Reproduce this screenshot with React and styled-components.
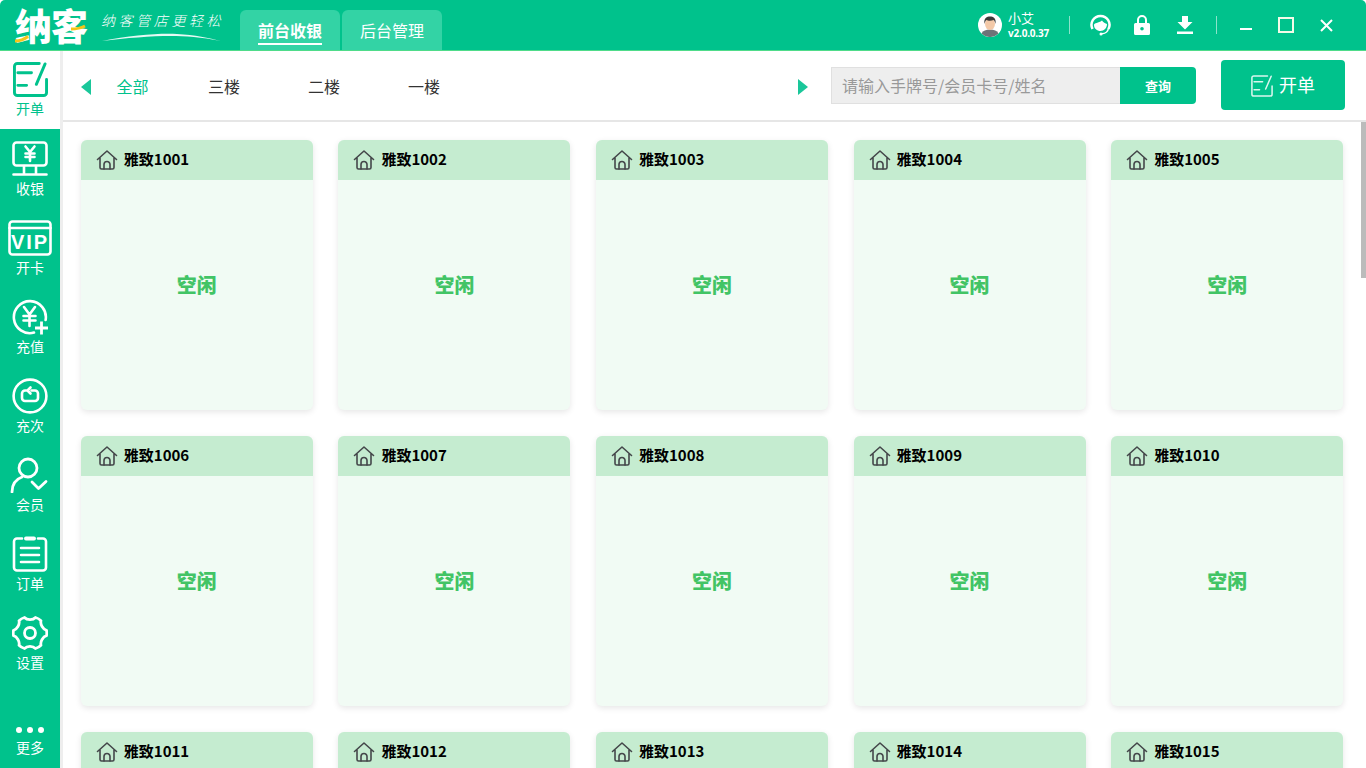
import React from 'react'
import styled, { createGlobalStyle } from 'styled-components'

const GREEN = '#00c28c'

const GlobalStyle = createGlobalStyle`
    html, body {
        margin: 0;
        height: 100%;
        overflow: hidden;
        background: #fff;
        font-family: "Noto Sans CJK SC", "Noto Sans", sans-serif;
    }
    #root { height: 100%; }
    * { box-sizing: border-box; }
`

const Page = styled.div`
    height: 100vh;
    display: flex;
    flex-direction: column;
`

const TopBar = styled.header`
    height: 51px;
    flex: none;
    display: flex;
    align-items: stretch;
    background: ${GREEN};
    border-bottom: 1px solid #4fdc8a;
    border-radius: 5px 5px 0 0;
    color: #fff;
    padding-left: 15px;
`

const Logo = styled.div`
    position: relative;
    width: 76px;
    font-size: 37px;
    font-weight: 900;
    line-height: 51px;
    letter-spacing: -1px;
    white-space: nowrap;
    color: #fff;
`

const LogoMark = styled.svg`
    position: absolute;
    left: 0;
    top: 0;
    width: 76px;
    height: 50px;
`

const Slogan = styled.div`
    width: 139px;
    margin-left: 10px;
    display: flex;
    flex-direction: column;
    padding-top: 11px;
`

const SloganText = styled.span`
    font-size: 14px;
    line-height: 18px;
    letter-spacing: 3.6px;
    font-weight: 300;
    font-style: italic;
    white-space: nowrap;
`

const Swoosh = styled.svg`
    width: 122px;
    height: 10px;
    margin-top: 3px;
`

const Tabs = styled.nav`
    display: flex;
    gap: 2px;
    margin-top: 10px;
`

const Tab = styled.div`
    width: 100px;
    height: 40px;
    border-radius: 6px 6px 0 0;
    background: #33d3a5;
    display: flex;
    align-items: flex-start;
    justify-content: center;
    padding-top: 8px;
    span {
        font-size: 16px;
        line-height: 24px;
        height: 27px;
        font-weight: ${p => (p.$active ? 700 : 400)};
        border-bottom: ${p => (p.$active ? '2px solid #fff' : 'none')};
    }
`

const RightArea = styled.div`
    margin-left: auto;
    display: flex;
    align-items: center;
    height: 50px;
    position: relative;
    padding-right: 33px;
`

const Avatar = styled.svg`
    width: 24px;
    height: 24px;
    margin-right: 6px;
`

const UserInfo = styled.div`
    width: 61px;
    display: flex;
    flex-direction: column;
    margin-top: -2px;
`

const UserName = styled.span`
    font-size: 13px;
    line-height: 17px;
`

const Version = styled.span`
    font-size: 10px;
    line-height: 14px;
    font-weight: 700;
    font-family: "Open Sans", sans-serif;
    letter-spacing: -0.2px;
`

const Separator = styled.i`
    width: 1px;
    height: 18px;
    margin-left: ${p => p.$gap || 0}px;
    background: rgba(255, 255, 255, 0.55);
`

const BarIcon = styled.svg`
    flex: none;
    margin-left: ${p => p.$gap}px;
    display: block;
`

const Body = styled.div`
    flex: 1;
    min-height: 0;
    display: flex;
`

const Sidebar = styled.aside`
    width: 63px;
    flex: none;
    background: ${GREEN};
    border-right: 3px solid #eee;
    display: flex;
    flex-direction: column;
    overflow: hidden;
`

const NavItem = styled.div`
    height: ${p => (p.$active ? 78 : 79)}px;
    margin-bottom: ${p => (p.$active ? 1 : 0)}px;
    flex: none;
    padding-top: 11px;
    display: flex;
    flex-direction: column;
    align-items: center;
    color: ${p => (p.$active ? GREEN : '#fff')};
    background: ${p => (p.$active ? '#fff' : 'transparent')};
    margin-top: ${p => (p.$last ? 'auto' : 0)};
    svg { display: block; flex: none; }
`

const NavLabel = styled.span`
    font-size: 14px;
    line-height: 18px;
    height: 18px;
    margin-top: 2px;
`

const Main = styled.main`
    flex: 1;
    min-width: 0;
    display: flex;
    flex-direction: column;
    position: relative;
`

const Toolbar = styled.div`
    height: 71px;
    flex: none;
    display: flex;
    align-items: center;
    background: #fff;
    border-bottom: 2px solid #e6e6e6;
    padding-left: 18px;
`

const Arrow = styled.svg`
    width: 10px;
    height: 16px;
    flex: none;
    margin-top: 3px;
`

const FloorList = styled.div`
    width: 707px;
    display: flex;
`

const Floor = styled.span`
    width: 100px;
    text-align: center;
    font-size: 16px;
    line-height: 24px;
    color: ${p => (p.$active ? GREEN : '#333')};
    &:first-child { width: 83px; }
`

const Search = styled.div`
    display: flex;
    margin-left: 23px;
    margin-top: -1px;
    height: 37px;
`

const SearchInput = styled.input`
    width: 289px;
    height: 37px;
    border: 1px solid #e0e0e0;
    border-right: none;
    background: #eee;
    padding: 0 10px;
    font: inherit;
    font-size: 16px;
    outline: none;
    &::placeholder { color: #999; opacity: 1; }
`

const SearchButton = styled.button`
    width: 76px;
    height: 37px;
    border: none;
    border-radius: 0 4px 4px 0;
    background: ${GREEN};
    color: #fff;
    font: inherit;
    font-size: 13px;
    font-weight: 700;
`

const OpenButton = styled.button`
    width: 124px;
    height: 50px;
    margin-left: 25px;
    margin-top: -2px;
    border: none;
    border-radius: 4px;
    background: ${GREEN};
    color: #fff;
    font: inherit;
    font-size: 18px;
    line-height: 24px;
    display: flex;
    align-items: center;
    justify-content: center;
    gap: 6px;
    span { margin-top: -2px; }
    svg { opacity: 0.85; margin-top: 2px; }
`

const Scroller = styled.div`
    flex: 1;
    min-height: 0;
    overflow: hidden;
    padding: 18px 22.8px 0 17.8px;
`

const ScrollThumb = styled.div`
    position: absolute;
    top: 71px;
    right: 0;
    width: 5px;
    height: 156px;
    background: #bbb;
`

const RoomGrid = styled.div`
    display: grid;
    grid-template-columns: repeat(5, 232px);
    justify-content: space-between;
    grid-auto-rows: 270px;
    row-gap: 26px;
    padding-bottom: 20px;
`

const Card = styled.div`
    border-radius: 6px;
    background: #f1fbf4;
    box-shadow: 0 2px 6px rgba(0, 0, 0, 0.1);
    display: flex;
    flex-direction: column;
`

const CardHead = styled.div`
    height: 40px;
    flex: none;
    display: flex;
    align-items: center;
    gap: 6px;
    padding-left: 15px;
    padding-bottom: 3px;
    background: #c5ecd0;
    border-radius: 6px 6px 0 0;
    color: #000;
    font-size: 15px;
    font-weight: 700;
    svg { margin-top: 3px; }
`

const CardBody = styled.div`
    flex: 1;
    display: flex;
    align-items: center;
    justify-content: center;
    padding-bottom: 22px;
    color: #42c465;
    font-size: 20px;
    font-weight: 900;
`

const HomeIcon = () => (
    <svg width="22" height="22" viewBox="0 0 22 22" fill="none" stroke="#44474a" strokeWidth="1.6" strokeLinejoin="round" strokeLinecap="round">
        <path d="M1.5 10.5 11 2l9.5 8.5M4 9v9.5a1.5 1.5 0 0 0 1.5 1.5h11a1.5 1.5 0 0 0 1.5-1.5V9" />
        <path d="M8 20v-4.5a3 3 0 0 1 6 0V20" />
    </svg>
)

const OpenIcon = ({ size = 36, width = 3 }) => (
    <svg width={size} height={size} viewBox="0 0 36 36" fill="none" stroke="currentColor" strokeWidth={width} strokeLinecap="round" strokeLinejoin="round">
        <path d="M27 1.5H4.5a3 3 0 0 0-3 3v27a3 3 0 0 0 3 3h27a3 3 0 0 0 3-3V18" />
        <path d="M5 11h14M5 24h9" />
        <path d="M33 2 24 23" />
    </svg>
)

const CashIcon = () => (
    <svg width="36" height="36" viewBox="0 0 36 36" fill="none" stroke="currentColor" strokeWidth="2.6" strokeLinecap="round" strokeLinejoin="round">
        <rect x="1.5" y="1.5" width="33" height="23" rx="3" />
        <path d="M12 25v7M24 25v7M1.5 33.5h33" />
        <path d="M13.5 5.5 18 11l4.5-5.5M18 11v9M13.5 12.5h9M13.5 16h9" />
    </svg>
)

const VipIcon = () => (
    <svg width="44" height="36" viewBox="0 0 44 36" fill="none" stroke="currentColor" strokeWidth="2.6" strokeLinecap="round" strokeLinejoin="round">
        <rect x="1.5" y="1.5" width="41" height="33" rx="3" />
        <path d="M1.5 8h41" />
        <text x="22" y="29" textAnchor="middle" fill="currentColor" stroke="none" fontFamily="Liberation Sans, sans-serif" fontWeight="700" fontSize="20" letterSpacing="2">VIP</text>
    </svg>
)

const RechargeIcon = () => (
    <svg width="36" height="36" viewBox="0 0 36 36" fill="none" stroke="currentColor" strokeWidth="2.6" strokeLinecap="round" strokeLinejoin="round">
        <path d="M22 33.6A16 16 0 1 1 33.6 21" />
        <path d="M12 8l5.5 7.5L23 8M17.5 15.5V27M11.5 17h12M11.5 21.5h12" />
        <path d="M23 29h13M29.5 22.5v13" strokeWidth="2.8" strokeLinecap="butt" />
    </svg>
)

const TimesIcon = () => (
    <svg width="36" height="36" viewBox="0 0 36 36" fill="none" stroke="currentColor" strokeWidth="2.6" strokeLinecap="round" strokeLinejoin="round">
        <circle cx="18" cy="18" r="16.4" />
        <path d="M14 12.5h-1a3 3 0 0 0-3 3v4.5a3 3 0 0 0 3 3h10a3 3 0 0 0 3-3v-4.5a3 3 0 0 0-3-3h-3.5" />
        <path d="M18.5 9.5 15.5 12.5l3 3" />
    </svg>
)

const MemberIcon = () => (
    <svg width="40" height="36" viewBox="0 0 40 36" fill="none" stroke="currentColor" strokeWidth="2.8" strokeLinecap="round" strokeLinejoin="round">
        <circle cx="18" cy="11" r="9" />
        <path d="M2 35c0-8 4.500-13 10-15" />
        <path d="M22 25l6.500 6.500L36 24.500" />
    </svg>
)

const OrderIcon = () => (
    <svg width="36" height="36" viewBox="0 0 36 36" fill="none" stroke="currentColor" strokeWidth="2.6" strokeLinecap="round" strokeLinejoin="round">
        <path d="M10 2.500H5a3 3 0 0 0-3 3V31.500a3 3 0 0 0 3 3h26a3 3 0 0 0 3-3V5.500a3 3 0 0 0-3-3h-5" />
        <path d="M14 2.500h8" strokeWidth="4" />
        <path d="M9 12h18M9 19h18M9 26h18" />
    </svg>
)

const GearIcon = () => (
    <svg width="36" height="36" viewBox="0 0 36 36" fill="none" stroke="currentColor" strokeWidth="2.8" strokeLinejoin="round">
        <path d="M12.500 3.500c2.500 2.800 8.500 2.800 11 0 1.800.5 4.200 1.900 5.500 3.200-1 3.600 2 8.700 5.500 9.600.4 1.800.4 3.600 0 5.400-3.500.9-6.500 6-5.500 9.600-1.300 1.300-3.700 2.700-5.500 3.200-2.500-2.800-8.500-2.800-11 0-1.800-.5-4.200-1.900-5.500-3.200 1-3.600-2-8.700-5.500-9.600-.4-1.800-.4-3.600 0-5.400C5 15.400 8 10.300 7 6.700c1.300-1.300 3.700-2.700 5.500-3.200Z" transform="translate(0 -1)" />
        <circle cx="18" cy="18" r="5.500" />
    </svg>
)

const DotsIcon = () => (
    <svg width="30" height="36" viewBox="0 0 30 36" fill="currentColor">
        <circle cx="4" cy="30" r="3" />
        <circle cx="15" cy="30" r="3" />
        <circle cx="26" cy="30" r="3" />
    </svg>
)

const navItems = [
    { label: '开单', icon: <OpenIcon size={35} />, active: true },
    { label: '收银', icon: <CashIcon /> },
    { label: '开卡', icon: <VipIcon /> },
    { label: '充值', icon: <RechargeIcon /> },
    { label: '充次', icon: <TimesIcon /> },
    { label: '会员', icon: <MemberIcon /> },
    { label: '订单', icon: <OrderIcon /> },
    { label: '设置', icon: <GearIcon /> },
]

const floors = ['全部', '三楼', '二楼', '一楼']
const rooms = Array.from({ length: 15 }, (_, i) => `雅致${1001 + i}`)

export default function App() {
    return (
        <Page>
            <GlobalStyle />
            <TopBar>
                <Logo>
                    纳客
                    <LogoMark viewBox="0 0 76 50">
                        <path d="M0 41c5 0 9-1.500 13-4.500" stroke="#f5c518" strokeWidth="3" fill="none" />
                        <path d="M56 29c5 0 9-.5 14-3" stroke="#f5c518" strokeWidth="3" fill="none" />
                    </LogoMark>
                </Logo>
                <Slogan>
                    <SloganText>纳客管店更轻松</SloganText>
                    <Swoosh viewBox="0 0 122 10">
                        <path d="M1 9C30 3 60 1 76 2c18 1 32 4 44 7C100 5 84 4 70 4 50 4 25 6 1 9Z" fill="#fff" opacity="0.9" />
                    </Swoosh>
                </Slogan>
                <Tabs>
                    <Tab $active><span>前台收银</span></Tab>
                    <Tab><span>后台管理</span></Tab>
                </Tabs>
                <RightArea>
                    <Avatar viewBox="0 0 24 24">
                        <circle cx="12" cy="12" r="12" fill="#fff" />
                        <path d="M3.500 20.500c1.500-3 4.500-4 8.500-4s7 1 8.500 4a12 12 0 0 1-17 0Z" fill="#6f7378" />
                        <ellipse cx="12" cy="11" rx="5" ry="6" fill="#f3c9a8" />
                        <path d="M6.500 11C5.500 5 9 3.500 12 3.500s6.500 1.500 5.500 7.500c-.5-2-1-3.500-2-4-2 1-5.500 1-7 0-1 .5-1.500 2-2 4Z" fill="#3b3a3a" />
                    </Avatar>
                    <UserInfo>
                        <UserName>小艾</UserName>
                        <Version>v2.0.0.37</Version>
                    </UserInfo>
                    <Separator />
                    <BarIcon $gap={20} width="21" height="22" viewBox="0 0 21 22" fill="none" stroke="#fff" strokeWidth="2.500">
                        <path d="M2.500 15A9 9 0 1 1 18.500 15" />
                        <path d="M4 11c0-2.500 4.500-1.500 8-4.500 1 2 3.500 3 5 3.500 0 4-3 7-6.500 7S4 14.500 4 11Z" fill="#fff" stroke="none" />
                        <path d="M18.500 14c-.5 3.500-3 5.500-6.500 5.800" strokeWidth="1.500" />
                        <circle cx="11" cy="20" r="1.500" fill="#fff" stroke="none" />
                    </BarIcon>
                    <BarIcon $gap={23} width="16" height="20" viewBox="0 0 16 20" fill="#fff">
                        <path fillRule="evenodd" d="M3 8V5a5 5 0 0 1 10 0v3h1.500A1.500 1.500 0 0 1 16 9.500v9a1.500 1.500 0 0 1-1.500 1.500h-13A1.500 1.500 0 0 1 0 18.500v-9A1.500 1.500 0 0 1 1.500 8H3Zm2 0h6V5a3 3 0 0 0-6 0v3Zm3 4a1.800 1.800 0 1 0 0 3.600A1.800 1.800 0 0 0 8 12Z" />
                    </BarIcon>
                    <BarIcon $gap={27} width="16" height="18" viewBox="0 0 16 18" fill="#fff">
                        <path d="M5 0h6v6h4.500L8 13.500.5 6H5V0ZM0 15.500h16V18H0v-2.500Z" />
                    </BarIcon>
                    <Separator $gap={23} />
                    <BarIcon $gap={23} width="13" height="14" viewBox="0 0 13 14" fill="#fff">
                        <path d="M0 10h12v2H0z" />
                    </BarIcon>
                    <BarIcon $gap={25} width="16" height="16" viewBox="0 0 16 16" fill="none" stroke="#f3fbe8" strokeWidth="2">
                        <rect x="1" y="1" width="14" height="14" />
                    </BarIcon>
                    <BarIcon $gap={26} width="13" height="13" viewBox="0 0 13 13" fill="none" stroke="#fff" strokeWidth="2">
                        <path d="M1 1l11 11M12 1 1 12" />
                    </BarIcon>
                </RightArea>
            </TopBar>
            <Body>
                <Sidebar>
                    {navItems.map(item => (
                        <NavItem key={item.label} $active={item.active}>
                            {item.icon}
                            <NavLabel>{item.label}</NavLabel>
                        </NavItem>
                    ))}
                    <NavItem $last>
                        <DotsIcon />
                        <NavLabel>更多</NavLabel>
                    </NavItem>
                </Sidebar>
                <Main>
                    <Toolbar>
                        <Arrow viewBox="0 0 10 16"><path d="M10 0v16L0 8z" fill="#1ac79a" /></Arrow>
                        <FloorList>
                            {floors.map((floor, i) => (
                                <Floor key={floor} $active={i === 0}>{floor}</Floor>
                            ))}
                        </FloorList>
                        <Arrow viewBox="0 0 10 16"><path d="M0 0v16l10-8z" fill="#1ac79a" /></Arrow>
                        <Search>
                            <SearchInput placeholder="请输入手牌号/会员卡号/姓名" />
                            <SearchButton>查询</SearchButton>
                        </Search>
                        <OpenButton>
                            <OpenIcon size={22} width={2.500} />
                            <span>开单</span>
                        </OpenButton>
                    </Toolbar>
                    <Scroller>
                        <RoomGrid>
                            {rooms.map(room => (
                                <Card key={room}>
                                    <CardHead>
                                        <HomeIcon />
                                        {room}
                                    </CardHead>
                                    <CardBody>空闲</CardBody>
                                </Card>
                            ))}
                        </RoomGrid>
                    </Scroller>
                    <ScrollThumb />
                </Main>
            </Body>
        </Page>
    )
}
